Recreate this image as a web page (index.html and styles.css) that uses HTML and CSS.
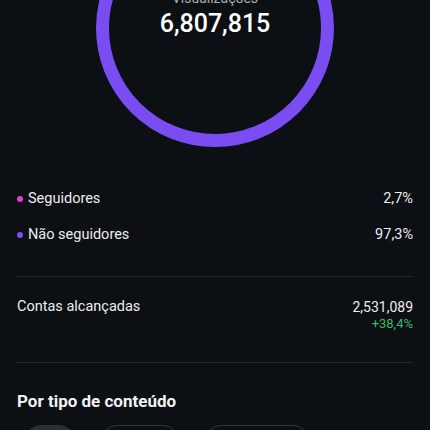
FILE: index.html
```html
<!DOCTYPE html>
<html lang="pt">
<head>
    <meta charset="UTF-8">
    <meta name="viewport" content="width=device-width, initial-scale=1.0">
    <title>Visualizações</title>
    <link rel="stylesheet" href="styles.css">
</head>
<body>
    <div class="hero">
        <div class="ring">
            <div class="ring-label">Visualizações</div>
            <div class="ring-value">6,807,815</div>
        </div>
    </div>

    <div class="legend">
        <div class="legend-row">
            <span class="dot dot-pink"></span>
            <span class="legend-name">Seguidores</span>
            <span class="legend-value">2,7%</span>
        </div>
        <div class="legend-row">
            <span class="dot dot-purple"></span>
            <span class="legend-name">Não seguidores</span>
            <span class="legend-value">97,3%</span>
        </div>
    </div>

    <hr class="divider">

    <div class="stat">
        <span class="stat-name">Contas alcançadas</span>
        <div class="stat-right">
            <div class="stat-value">2,531,089</div>
            <div class="stat-change">+38,4%</div>
        </div>
    </div>

    <hr class="divider divider-2">

    <h3 class="section-title">Por tipo de conteúdo</h3>

    <div class="pills">
        <span class="pill pill-active">Tudo</span>
        <span class="pill pill-2">Stories</span>
        <span class="pill pill-3">Publicações</span>
    </div>
</body>
</html>
```

FILE: styles.css
```css
body {
    font-family: Roboto, "Noto Sans", Arial, sans-serif;
    margin: 0;
    padding: 0;
    background-color: #0c0f14;
    color: #ececec;
    height: 430px;
    overflow: hidden;
}

.hero {
    height: 147px;
    overflow: hidden;
    display: flex;
    justify-content: center;
}

.ring {
    width: 238px;
    height: 238px;
    margin-top: -91px;
    flex-shrink: 0;
    box-sizing: border-box;
    border: 13px solid #7a4df3;
    border-radius: 50%;
    padding-top: 67px;
    text-align: center;
}

.ring-label {
    font-size: 14px;
    line-height: 18px;
    color: #a9abb0;
    margin-bottom: 2px;
}

.ring-value {
    font-size: 25px;
    line-height: 30px;
    font-weight: 500;
    color: #fff;
}

.legend {
    padding: 42px 17px 0 17px;
    display: flex;
    flex-direction: column;
    gap: 16px;
}

.legend-row {
    display: flex;
    align-items: center;
    font-size: 14.5px;
    line-height: 20px;
}

.dot {
    width: 6px;
    height: 6px;
    border-radius: 50%;
    margin-right: 5px;
}

.dot-pink {
    background-color: #e03fdc;
}

.dot-purple {
    background-color: #7b4ff5;
}

.legend-value {
    margin-left: auto;
}

.divider {
    border: none;
    height: 1px;
    background-color: #24272c;
    margin: 31px 17px 0 17px;
}

.stat {
    display: flex;
    justify-content: space-between;
    padding: 21px 17px 0 17px;
    font-size: 14.5px;
    line-height: 18px;
}

.stat-value {
    font-size: 14px;
}

.stat-right {
    text-align: right;
}

.stat-change {
    font-size: 13px;
    line-height: 18px;
    margin-top: -1px;
    color: #3cb867;
}

.divider-2 {
    margin-top: 29px;
}

.section-title {
    margin: 27px 17px 0 17px;
    font-size: 17px;
    line-height: 22px;
    font-weight: 700;
    color: #f2f2f2;
}

.pills {
    display: flex;
    gap: 26px;
    padding: 13px 25px 0 25px;
}

.pill {
    box-sizing: border-box;
    height: 32px;
    border-radius: 16px;
    border: 1px solid #33363c;
    font-size: 14px;
    line-height: 30px;
    text-align: center;
    color: #ececec;
}

.pill-active {
    width: 50px;
    background-color: #2c2f35;
    border-color: #2c2f35;
}

.pill-2 {
    width: 78px;
}

.pill-3 {
    width: 104px;
}
```
